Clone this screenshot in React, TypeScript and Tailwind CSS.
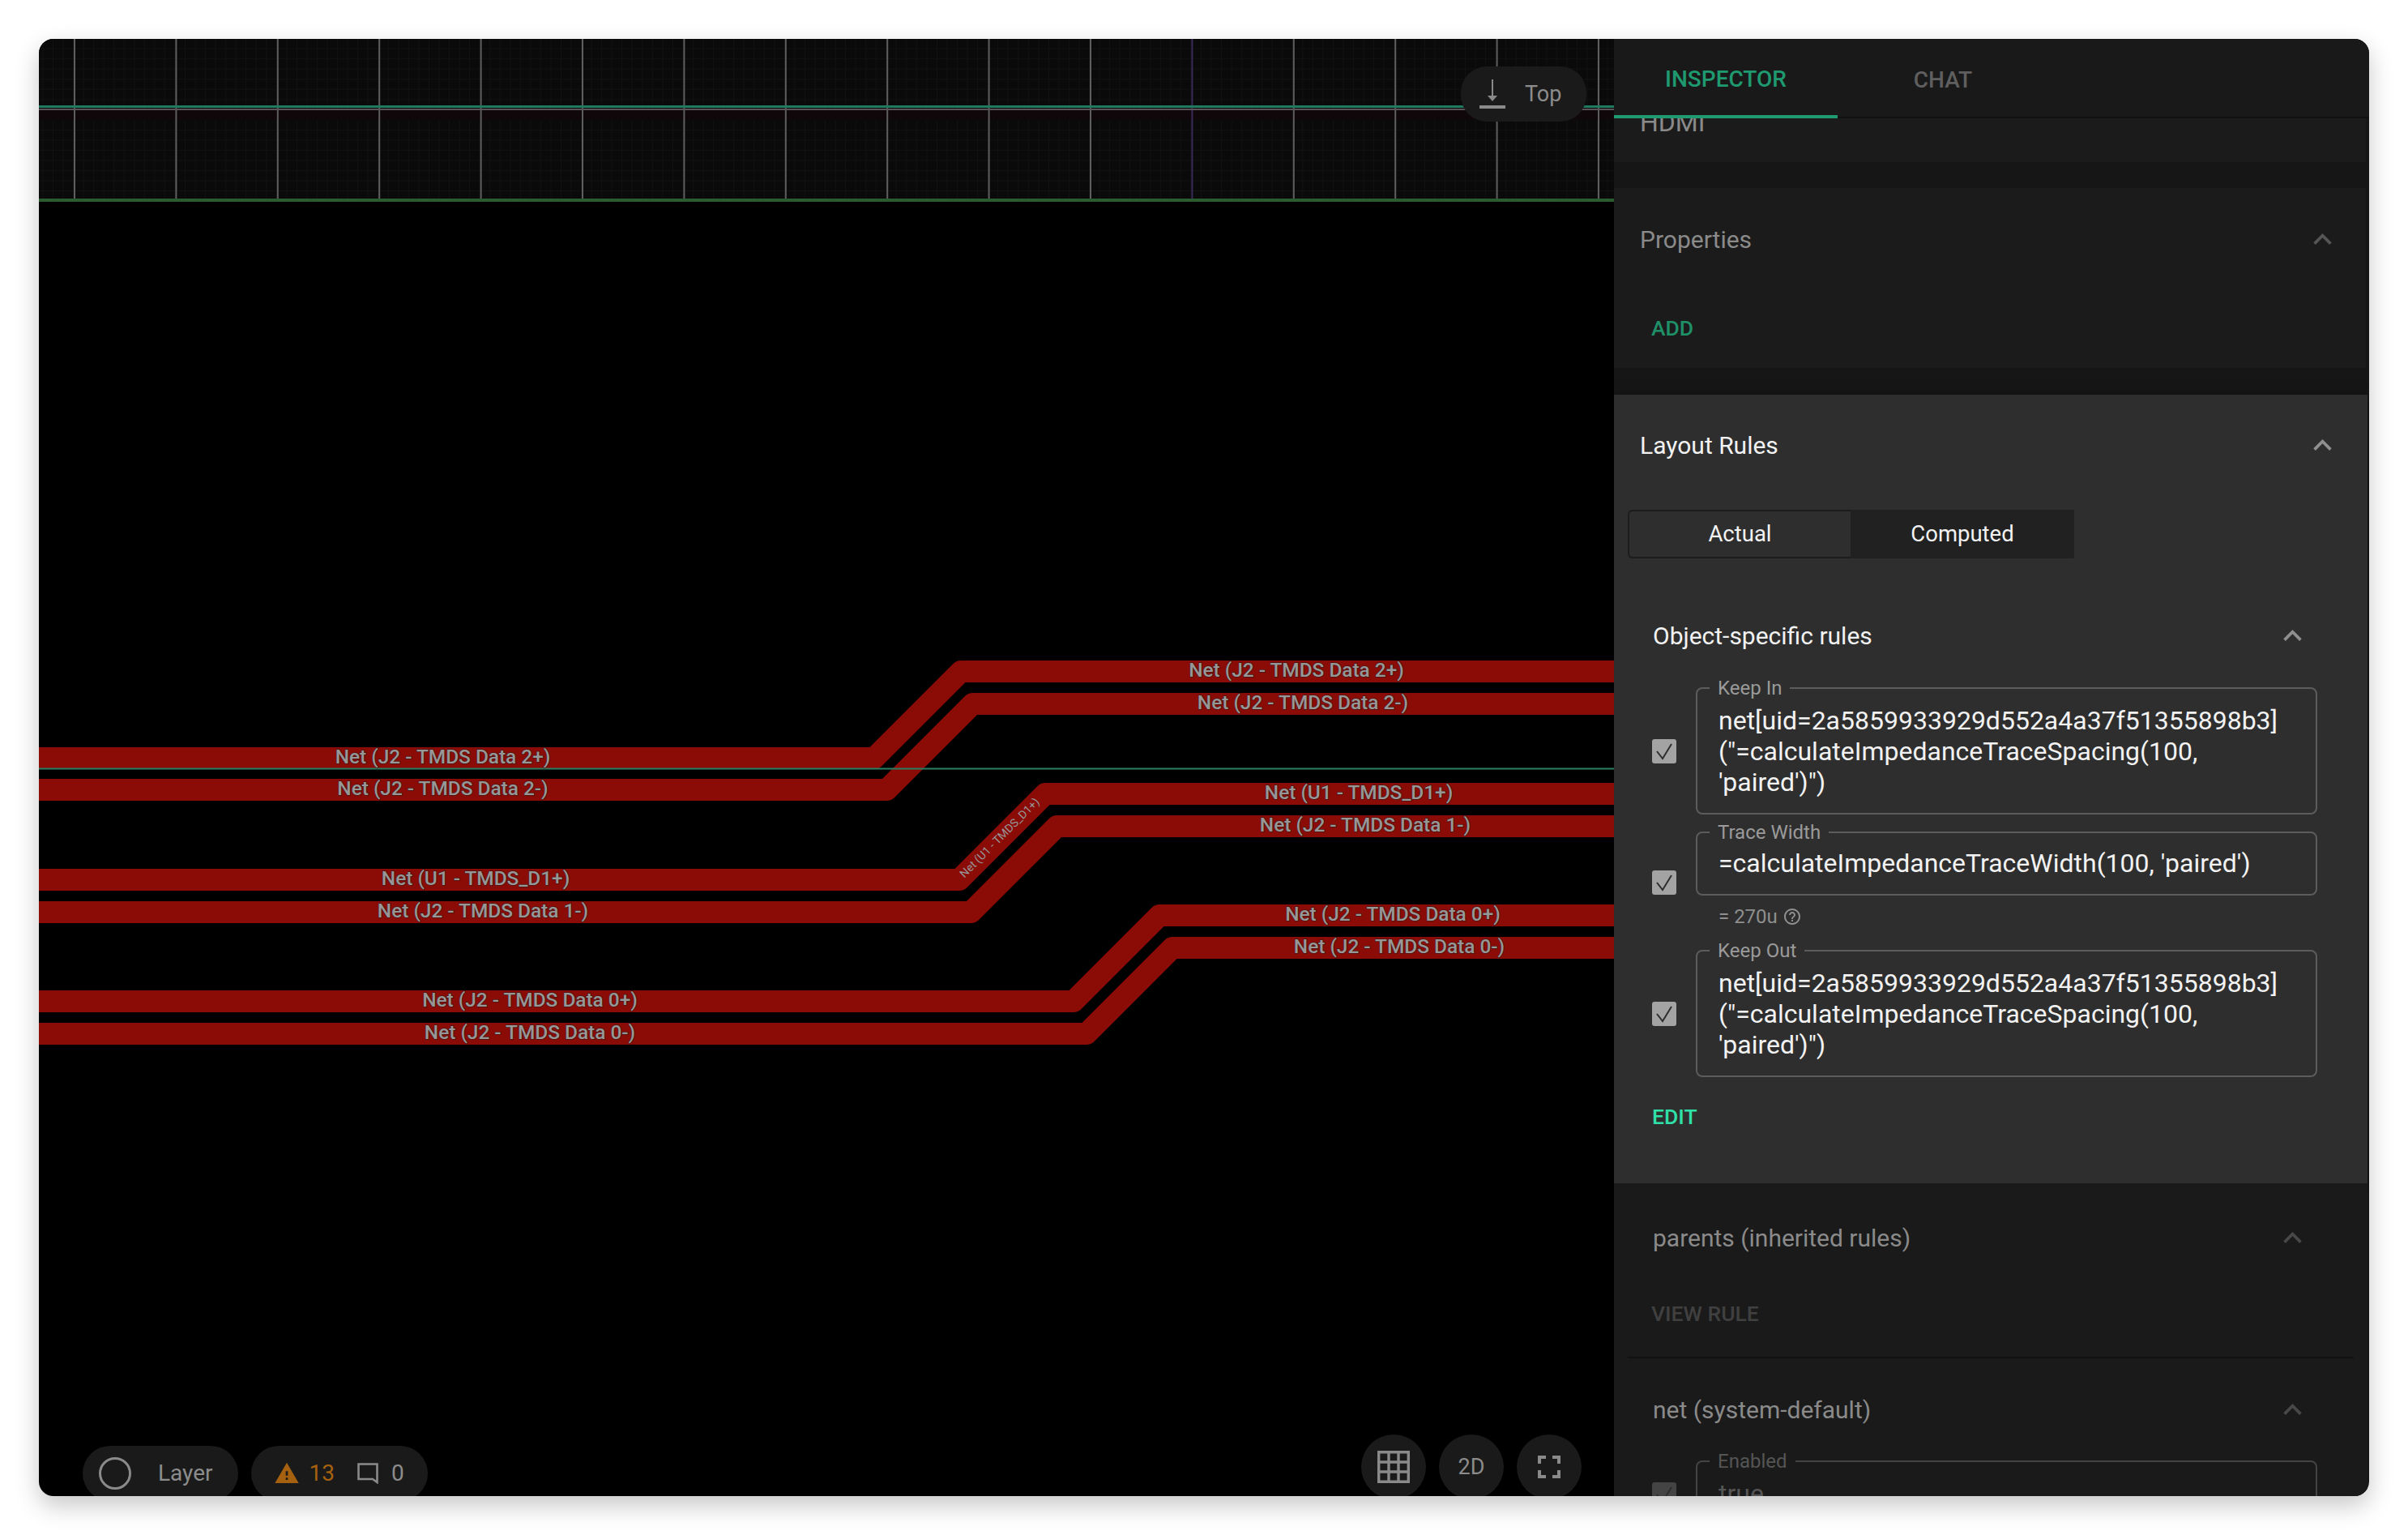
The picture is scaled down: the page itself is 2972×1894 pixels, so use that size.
import { ReactNode } from "react";

const traces = [
  { d: "M48 935.5H1079L1186 828.5H1992", left: ["Net (J2 - TMDS Data 2+)", 546.5], right: ["Net (J2 - TMDS Data 2+)", 1600], ly: 935.5, ry: 828.5 },
  { d: "M48 974.5H1094.5L1200.5 868.5H1992", left: ["Net (J2 - TMDS Data 2-)", 546.5], right: ["Net (J2 - TMDS Data 2-)", 1608], ly: 974.5, ry: 868.5 },
  { d: "M48 1085.5H1184L1290 979.5H1992", left: ["Net (U1 - TMDS_D1+)", 587], right: ["Net (U1 - TMDS_D1+)", 1677], ly: 1085.5, ry: 979.5 },
  { d: "M48 1125.5H1198.5L1304.5 1019.5H1992", left: ["Net (J2 - TMDS Data 1-)", 596], right: ["Net (J2 - TMDS Data 1-)", 1685], ly: 1125.5, ry: 1019.5 },
  { d: "M48 1235.5H1325L1431 1129.5H1992", left: ["Net (J2 - TMDS Data 0+)", 654], right: ["Net (J2 - TMDS Data 0+)", 1719], ly: 1235.5, ry: 1129.5 },
  { d: "M48 1275.5H1341L1447 1169.5H1992", left: ["Net (J2 - TMDS Data 0-)", 654], right: ["Net (J2 - TMDS Data 0-)", 1727], ly: 1275.5, ry: 1169.5 },
];

const majorLines = Array.from({ length: 16 }, (_, i) => 91 + i * 125.4);

function Canvas() {
  return (
    <svg className="absolute inset-0 w-full h-full" viewBox="48 48 1944 1798">
      <defs>
        <pattern id="minor" x="91" y="48" width="12.54" height="12.54" patternUnits="userSpaceOnUse">
          <path d="M12.54 0V12.54M0 12.54H12.54" stroke="#131313" strokeWidth="1.5" fill="none" />
        </pattern>
      </defs>
      <rect x="48" y="48" width="1944" height="198" fill="#0a0a0a" />
      <rect x="48" y="48" width="1944" height="198" fill="url(#minor)" />
      <rect x="48" y="136" width="1944" height="12" fill="#10070a" />
      {majorLines.map((x, i) => (
        <rect key={x} x={x} y="48" width="2" height="198" fill={i === 11 ? "#3a2a5a" : "#5e5e5e"} />
      ))}
      <rect x="48" y="130" width="1944" height="3" fill="#1f7a5e" />
      <rect x="48" y="134" width="1944" height="2" fill="#5a5358" />
      <rect x="48" y="245" width="1944" height="4" fill="#2b5c2e" />

      {traces.map((t) => (
        <path key={t.d} d={t.d} fill="none" stroke="#8b0b07" strokeWidth="27" strokeLinejoin="round" />
      ))}
      <rect x="48" y="947.5" width="1944" height="2" fill="#2c7f62" />

      <g className="[font-family:Roboto,sans-serif] [paint-order:stroke]" fontSize="24.4" fontWeight="500" fill="#979797" stroke="#4a1512" strokeWidth="1.5" textAnchor="middle">
        {traces.map((t) => (
          <g key={t.d}>
            <text x={t.left[1]} y={t.ly + 6.5}>{t.left[0]}</text>
            <text x={t.right[1]} y={t.ry + 6.5}>{t.right[0]}</text>
          </g>
        ))}
        <text x="0" y="0" fontSize="14" fontWeight="400" strokeWidth="0" transform="translate(1237 1037) rotate(-45)">
          Net (U1 - TMDS_D1+)
        </text>
      </g>
    </svg>
  );
}

function Chevron({ className }: { className: string }) {
  return (
    <svg className={className} width="45" height="45" viewBox="0 0 24 24" fill="currentColor">
      <path d="M12 8l-6 6 1.41 1.41L12 10.83l4.59 4.58L18 14z" />
    </svg>
  );
}

function Checkbox({ className, dim }: { className: string; dim?: boolean }) {
  return (
    <div className={`w-[30px] h-[30px] shrink-0 rounded-[3px] flex items-center justify-center ${dim ? "bg-[#444444]" : "bg-[#a3a3a3]"} ${className}`}>
      <svg width="24" height="24" viewBox="0 0 24 24" fill="none" stroke="#2e2e2e" strokeWidth="2">
        <path d="M3 12l7 9L21 3" />
      </svg>
    </div>
  );
}

function Rule({ label, compact, children }: { label: string; compact?: boolean; children: ReactNode }) {
  return (
    <fieldset className={`border-2 border-[#5c5c5c] rounded-[8px] pl-[26px] pr-[10px] pb-[19px] w-[767px] min-w-0 ${compact ? "pt-[5px]" : "pt-[7px]"}`}>
      <legend className="-ml-[11px] px-[10px] text-[24px] leading-[28px] text-[#9a9a9a]">{label}</legend>
      <div className="text-[32px] leading-[38px] text-[#f2f2f2]">{children}</div>
    </fieldset>
  );
}

function SubHeader({ title, color, chevron }: { title: string; color: string; chevron: string }) {
  return (
    <div className="h-[76px] flex items-center justify-between pl-[48px] pr-[70px]">
      <span className={`text-[30px] ${color}`}>{title}</span>
      <Chevron className={chevron} />
    </div>
  );
}

export default function App() {
  return (
    <div className="w-[2972px] h-[1894px] bg-white pt-[48px] pl-[48px] [font-family:Roboto,sans-serif]">
      <div className="w-[2876px] h-[1798px] flex rounded-[18px] overflow-hidden shadow-[0_12px_30px_rgba(0,0,0,0.22)]">
        <div className="relative flex-1 bg-black overflow-hidden">
          <Canvas />

          <div className="absolute top-[34px] right-[34px] h-[68px] w-[155px] rounded-[32px] bg-[#1a1a1a] flex items-center pl-[23px] gap-[24px]">
            <svg width="32" height="36" viewBox="0 0 32 36" fill="#8a8a8a">
              <rect x="15" y="0" width="2" height="22" />
              <path d="M10 20h12l-6 7z" />
              <rect x="0" y="32" width="32" height="4" />
            </svg>
            <span className="text-[27px] text-[#8c8c8c]">Top</span>
          </div>

          <div className="absolute left-[54px] bottom-[-6px] flex gap-[16px]">
            <div className="h-[68px] rounded-[34px] bg-[#1a1a1a] flex items-center pl-[20px] pr-[31px]">
              <div className="w-[40px] h-[40px] rounded-full border-[3px] border-[#8a8a8a]" />
              <span className="ml-[33px] text-[28px] text-[#8c8c8c]">Layer</span>
            </div>
            <div className="h-[68px] rounded-[34px] bg-[#1a1a1a] flex items-center pl-[28px] pr-[29px]">
              <svg width="32" height="32" viewBox="0 0 24 24" fill="#a5610f">
                <path d="M1 21h22L12 2 1 21zm12-3h-2v-2h2v2zm0-4h-2v-4h2v4z" />
              </svg>
              <span className="ml-[12px] text-[28px] text-[#a5610f]">13</span>
              <svg className="ml-[28px]" width="26" height="26" viewBox="0 0 26 26" fill="none" stroke="#8a8a8a" strokeWidth="2.6">
                <path d="M1.5 1.5H24.5V24L19 20H1.5Z" />
              </svg>
              <span className="ml-[16px] text-[28px] text-[#8c8c8c]">0</span>
            </div>
          </div>

          <div className="absolute right-[40px] bottom-[-4px] flex gap-[16px] text-[#8c8c8c]">
            <div className="w-[80px] h-[80px] rounded-full bg-[#1a1a1a] flex items-center justify-center">
              <svg width="40" height="40" viewBox="0 0 40 40" fill="none" stroke="#8a8a8a" strokeWidth="3.4">
                <path d="M1.7 1.7H38.3V38.3H1.7ZM14 1.7V38.3M26 1.7V38.3M1.7 14H38.3M1.7 26H38.3" />
              </svg>
            </div>
            <div className="w-[80px] h-[80px] rounded-full bg-[#1a1a1a] flex items-center justify-center text-[27px]">2D</div>
            <div className="w-[80px] h-[80px] rounded-full bg-[#1a1a1a] flex items-center justify-center">
              <svg width="48" height="48" viewBox="0 0 24 24" fill="#8a8a8a">
                <path d="M7 14H5v5h5v-2H7v-3zm-2-4h2V7h3V5H5v5zm12 7h-3v2h5v-5h-2v3zM14 5v2h3v3h2V5h-5z" />
              </svg>
            </div>
          </div>
        </div>

        <div className="w-[932px] shrink-0 bg-[#161616] overflow-hidden flex flex-col">
          <div className="h-[98px] shrink-0 flex bg-[#191919] border-b-2 border-[#111111] text-[28px] font-medium">
            <div className="w-[276px] flex items-center justify-center pt-[6px] border-b-4 border-[#1f9a70] text-[#1f9a70] -mb-[2px]">INSPECTOR</div>
            <div className="w-[260px] flex items-center justify-center pt-[6px] text-[#5f5f5f]">CHAT</div>
          </div>

          <div className="h-[54px] shrink-0 bg-[#1b1b1b] overflow-hidden pl-[32px] mr-[4px]">
            <div className="-mt-[13px] text-[32px] leading-[36px] text-[#8a8a8a]">HDMI</div>
          </div>

          <div className="h-[222px] shrink-0 mt-[32px] bg-[#1b1b1b] mr-[4px]">
            <div className="h-[126px] flex items-center justify-between pl-[32px] pr-[31px]">
              <span className="text-[30px] text-[#8a8a8a]">Properties</span>
              <Chevron className="text-[#555555]" />
            </div>
            <div className="ml-[46px] mt-[32px] text-[26.5px] leading-[30px] font-medium text-[#1f8f68]">ADD</div>
          </div>

          <div className="h-[973px] shrink-0 mt-[33px] bg-[#2e2e2e] mr-[2px] shadow-[0_4px_14px_rgba(0,0,0,0.5)] relative">
            <div className="h-[124px] flex items-center justify-between pl-[32px] pr-[33px]">
              <span className="text-[30px] text-[#f2f2f2]">Layout Rules</span>
              <Chevron className="text-[#8f8f8f]" />
            </div>
            <div className="ml-[17px] mt-[18px] w-[551px] h-[60px] flex text-[27.5px] text-[#f2f2f2]">
              <div className="w-[275px] flex items-center justify-center border-2 border-r-0 border-[#1c1c1c] rounded-l-[6px]">Actual</div>
              <div className="flex-1 flex items-center justify-center bg-[#212121] rounded-r-[2px]">Computed</div>
            </div>
            <div className="mt-[57px]">
              <SubHeader title="Object-specific rules" color="text-[#f2f2f2]" chevron="text-[#8f8f8f]" />
            </div>
            <div className="mt-[13px] pl-[47px] flex flex-col">
              <div className="flex items-center gap-[24px]">
                <Checkbox className="mt-[14px]" />
                <Rule label="Keep In">
                  net[uid=2a5859933929d552a4a37f51355898b3]
                  <br />
                  {"(\"=calculateImpedanceTraceSpacing(100,"}
                  <br />
                  {"'paired')\")"}
                </Rule>
              </div>
              <div className="flex items-center gap-[24px] mt-[8px]">
                <Checkbox className="mt-[18px]" />
                <div>
                  <Rule label="Trace Width" compact>{"=calculateImpedanceTraceWidth(100, 'paired')"}</Rule>
                  <div className="pl-[28px] pt-[10px] h-[42px] flex items-center gap-[6px] text-[24px] leading-[32px] text-[#8f8f8f]">
                    <span>= 270u</span>
                    <svg width="24" height="24" viewBox="0 0 24 24" fill="#8f8f8f">
                      <path d="M11 18h2v-2h-2v2zm1-16C6.48 2 2 6.48 2 12s4.48 10 10 10 10-4.48 10-10S17.52 2 12 2zm0 18c-4.41 0-8-3.59-8-8s3.59-8 8-8 8 3.59 8 8-3.59 8-8 8zm0-14c-2.21 0-4 1.79-4 4h2c0-1.1.9-2 2-2s2 .9 2 2c0 2-3 1.75-3 5h2c0-2.25 3-2.5 3-5 0-2.21-1.79-4-4-4z" />
                    </svg>
                  </div>
                </div>
              </div>
              <div className="flex items-center gap-[24px] mt-[12px]">
                <Checkbox className="mt-[14px]" />
                <Rule label="Keep Out">
                  net[uid=2a5859933929d552a4a37f51355898b3]
                  <br />
                  {"(\"=calculateImpedanceTraceSpacing(100,"}
                  <br />
                  {"'paired')\")"}
                </Rule>
              </div>
              <div className="mt-[34px] text-[26.5px] leading-[30px] font-medium text-[#2fe0a8]">EDIT</div>
            </div>
          </div>

          <div className="relative flex-1 bg-[#1a1a1a] mr-[2px]">
            <div className="pt-[29px]">
              <SubHeader title="parents (inherited rules)" color="text-[#8a8a8a]" chevron="text-[#484848]" />
            </div>
            <div className="ml-[46px] mt-[41px] text-[26.5px] leading-[30px] font-medium text-[#404040]">VIEW RULE</div>
            <div className="mx-[17px] mt-[38px] h-[2px] bg-[#111111]" />
            <div className="mt-[25px]">
              <SubHeader title="net (system-default)" color="text-[#8a8a8a]" chevron="text-[#484848]" />
            </div>
            <div className="mt-[12px] pl-[47px] flex gap-[24px]">
              <Checkbox className="mt-[40px]" dim />
              <fieldset className="border-2 border-[#444444] rounded-[8px] pl-[26px] pr-[10px] pt-[7px] h-[120px] w-[767px] min-w-0">
                <legend className="-ml-[11px] px-[10px] text-[24px] leading-[28px] text-[#555555]">Enabled</legend>
                <div className="text-[32px] leading-[38px] text-[#555555]">true</div>
              </fieldset>
            </div>
          </div>
        </div>
      </div>
    </div>
  );
}
